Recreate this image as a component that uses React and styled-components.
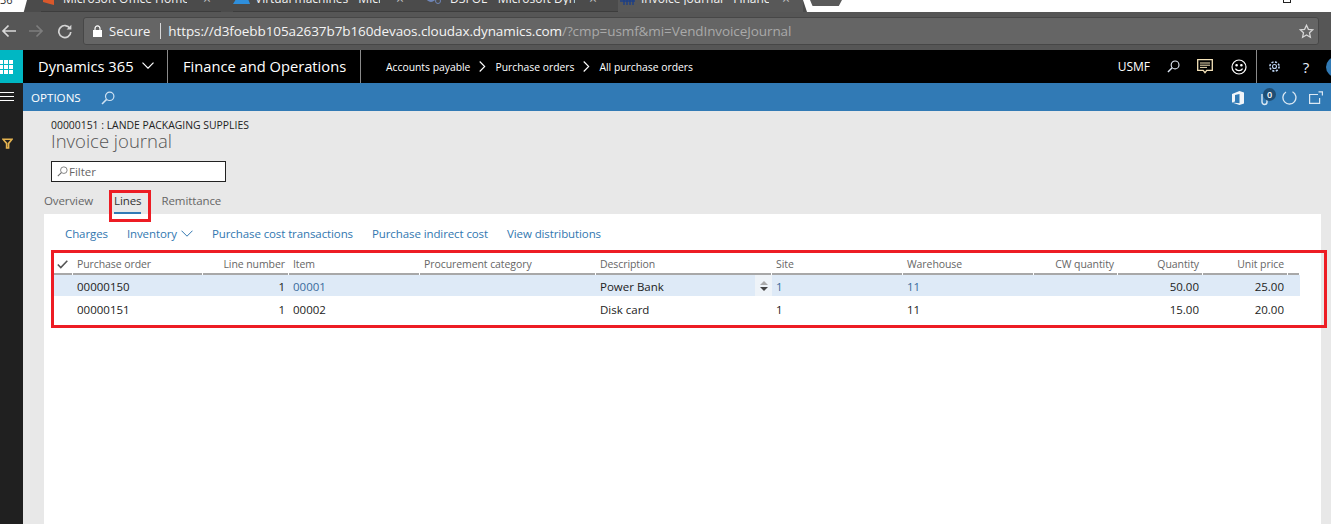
import React from "react";
import styled, { createGlobalStyle } from "styled-components";

const Global = createGlobalStyle`
  html, body { margin: 0; padding: 0; background: #e8e8e8; overflow: hidden; }
  * { box-sizing: border-box; }
  body { font-family: "Open Sans", "Noto Sans", sans-serif; }
`;

const Page = styled.div`
  position: relative;
  width: 1331px;
  height: 524px;
  overflow: hidden;
  display: flex;
  flex-direction: column;
`;

/* browser tabs */
const TabStrip = styled.div`
  height: 12px;
  flex: none;
  display: flex;
  background: #4b4b4b;
  overflow: hidden;
`;
const WhiteTab = styled.div`
  width: 27px;
  height: 12px;
  background: #fff;
  clip-path: polygon(0 0, 100% 0, 88% 100%, 0 100%);
  font-size: 11px;
  line-height: 0;
  color: #333;
  flex: none;
`;
const Tab = styled.div`
  width: ${p => p.$w}px;
  margin-left: ${p => p.$ml || 0}px;
  height: 12px;
  flex: none;
  display: flex;
  align-items: flex-end;
  padding-bottom: 3px;
  color: #f2f2f2;
  font-size: 12px;
  line-height: 12px;
  white-space: nowrap;
  overflow: hidden;
  background: ${p => (p.$active ? "#585858" : "transparent")};
  border-bottom: 1px solid ${p => (p.$active ? "#585858" : "#3d3d3d")};
`;
const TabIcon = styled.svg`
  width: 17px;
  height: 14px;
  flex: none;
  margin-right: ${p => p.$mr}px;
  margin-bottom: 3px;
`;
const TabTitle = styled.span`
  width: ${p => p.$w}px;
  flex: none;
  overflow: hidden;
  position: relative;
  top: -3px;
`;
const TabClose = styled.span`
  flex: none;
  margin-left: ${p => p.$ml}px;
  color: #bdbdbd;
  font-size: 14px;
  position: relative;
  top: -3px;
`;
const WindowArea = styled.div`
  flex: 1;
  height: 12px;
  background: #fff;
  clip-path: polygon(0 0, 100% 0, 100% 100%, 4px 100%);
  display: flex;
  justify-content: flex-end;
  padding-left: 7px;
`;
const NewTabShape = styled.div`
  width: 32px;
  height: 6px;
  background: #5a5a5a;
  clip-path: polygon(0 0, 100% 0, 90% 100%, 8% 100%);
  margin-right: auto;
`;
const WinSquare = styled.div`
  width: 8px;
  height: 3px;
  border: 1px solid #222;
  border-top: 0;
  margin-right: 40px;
`;

/* address bar */
const AddressRow = styled.div`
  height: 38px;
  flex: none;
  background: #565656;
  display: flex;
  align-items: center;
  padding: 0 12px 0 0;
`;
const NavIcons = styled.div`
  width: 83px;
  flex: none;
  display: flex;
  align-items: center;
  padding-left: 1px;
  gap: 13px;
`;
const Omnibox = styled.div`
  flex: 1;
  height: 28px;
  background: #656565;
  border: 1px solid #474747;
  border-radius: 3px;
  display: flex;
  align-items: center;
  padding: 0 4px 0 9px;
  font-size: 13.5px;
  color: #f4f4f4;
  white-space: nowrap;
`;
const Secure = styled.span`
  margin-left: 7px;
  padding-right: 10px;
  border-right: 1px solid #d8d8d8;
  line-height: 16px;
  font-size: 13px;
`;
const Url = styled.span`
  margin-left: 7px;
  letter-spacing: -0.09px;
`;
const UrlDim = styled.span`
  color: #a9a9a9;
`;
const Star = styled.svg`
  margin-left: auto;
`;

/* black navigation */
const NavBar = styled.div`
  height: 33px;
  flex: none;
  background: #000;
  display: flex;
  align-items: stretch;
  color: #fff;
  white-space: nowrap;
`;
const Launcher = styled.div`
  width: 23px;
  flex: none;
  background: #00b7c3;
  display: flex;
  align-items: center;
  overflow: hidden;
`;
const LaunchGrid = styled.div`
  display: grid;
  grid-template-columns: repeat(3, 4px);
  gap: 1px;
  margin-left: -1px;
`;
const LaunchDot = styled.i`
  width: 4px;
  height: 4px;
  background: #fff;
`;
const Product = styled.div`
  width: ${p => p.$w}px;
  flex: none;
  display: flex;
  align-items: center;
  padding: 0 0 2px ${p => p.$pl}px;
  border-right: 1px solid #8a8a8a;
  font-size: 14.7px;
  gap: 8px;
`;
const Crumbs = styled.div`
  display: flex;
  align-items: center;
  padding-left: 25px;
  font-size: 10.35px;
  flex: 1;
`;
const CrumbArrow = styled.svg`
  margin: 0 9px;
`;
const NavRight = styled.div`
  display: flex;
  align-items: center;
  flex: none;
`;
const Company = styled.span`
  font-size: 12px;
  margin-right: 16px;
`;
const NavIconCell = styled.span`
  display: flex;
  align-items: center;
  justify-content: center;
  width: ${p => p.$w}px;
  height: 33px;
  flex: none;
  font-size: 15px;
  color: #e8f0ff;
`;
const NavDivider = styled.span`
  width: 1px;
  height: 33px;
  background: #8a8a8a;
  flex: none;
`;
const Avatar = styled.span`
  width: 20px;
  height: 20px;
  border-radius: 50%;
  background: #317ab5;
  flex: none;
  margin-left: 5px;
  margin-right: -15px;
`;

/* body */
const Body = styled.div`
  flex: 1;
  display: flex;
  min-height: 0;
`;
const Rail = styled.div`
  width: 23px;
  flex: none;
  background: #202020;
  display: flex;
  flex-direction: column;
`;
const Burger = styled.div`
  height: 27px;
  width: 100%;
  display: flex;
  flex-direction: column;
  justify-content: center;
  gap: 3px;
  padding-right: 9px;
  margin-bottom: 28px;
  i { display: block; height: 1px; background: #fff; }
`;
const RailFilter = styled.div`
  padding-left: 2px;
  display: flex;
`;
const Content = styled.div`
  flex: 1;
  min-width: 0;
  display: flex;
  flex-direction: column;
`;
const OptionsBar = styled.div`
  height: 27px;
  flex: none;
  background: #317ab5;
  display: flex;
  align-items: center;
  color: #fff;
  padding: 2px 0 0 8px;
`;
const OptionsLabel = styled.span`
  font-size: 11.6px;
  margin-right: 20px;
`;
const OptionsRight = styled.div`
  margin-left: auto;
  display: flex;
  align-items: center;
  padding-right: 8px;
`;
const ClipWrap = styled.span`
  position: relative;
  display: flex;
  margin-left: 16px;
  margin-right: 13px;
`;
const Badge = styled.span`
  position: absolute;
  left: 3px;
  top: -2px;
  width: 13px;
  height: 13px;
  border-radius: 50%;
  background: #1f4e74;
  color: #fff;
  font-size: 9px;
  font-weight: 600;
  line-height: 13px;
  text-align: center;
`;
const IconGap = styled.span`
  display: flex;
  margin-left: ${p => p.$ml}px;
`;
const Workspace = styled.div`
  flex: 1;
  min-height: 0;
  background: #e8e8e8;
  display: flex;
  flex-direction: column;
  padding-left: 21px;
  padding-right: 10px;
  border-top: 1px solid #317ab5;
`;
const Caption = styled.div`
  margin: 8px 0 0 7px;
  height: 13px;
  font-size: 10.4px;
  line-height: 13px;
  color: #222;
`;
const Title = styled.h1`
  margin: 0 0 0 7px;
  height: 18px;
  font-size: 18.5px;
  line-height: 18px;
  font-weight: 300;
  color: #555;
`;
const FilterBox = styled.div`
  margin: 11px 0 0 7px;
  width: 175px;
  height: 21px;
  flex: none;
  background: #fff;
  border: 1px solid #222;
  display: flex;
  align-items: center;
  padding-left: 5px;
  gap: 1px;
  font-size: 11.5px;
  color: #666;
`;
const TabRow = styled.div`
  height: 32px;
  flex: none;
  display: flex;
  align-items: stretch;
`;
const PageTab = styled.div`
  margin-left: ${p => p.$ml || 0}px;
  font-size: 11.5px;
  letter-spacing: -0.1px;
  color: ${p => (p.$active ? "#333" : "#666")};
  display: flex;
  align-items: center;
  height: 32px;
  padding-top: 7px;
  border-bottom: 2px solid ${p => (p.$active ? "#317ab5" : "transparent")};
`;
const Panel = styled.div`
  flex: 1;
  min-height: 0;
  background: #fff;
  padding: 0 21px 0 9px;
`;
const Actions = styled.div`
  height: 38px;
  display: flex;
  align-items: center;
  padding-left: 12px;
  padding-top: 1px;
  font-size: 11.5px;
  letter-spacing: -0.1px;
  color: #3277b0;
  white-space: nowrap;
`;
const Action = styled.span`
  display: flex;
  align-items: center;
  gap: 4px;
  margin-left: ${p => p.$ml || 0}px;
`;

/* grid */
const COLS = "20px 130px 86px 131px 176px 176px 131px 131px 84px 85px 85px 12px";
const GridRow = styled.div`
  display: grid;
  grid-template-columns: ${COLS};
  align-items: center;
  height: ${p => p.$h}px;
  background: ${p => (p.$on ? "#deeaf7" : "transparent")};
  font-size: 11.5px;
  color: #222;
`;
const HeadRow = styled(GridRow)`
  color: #666;
  font-size: 10.5px;
  letter-spacing: -0.08px;
`;
const HeadCell = styled.div`
  height: 100%;
  display: flex;
  align-items: center;
  justify-content: ${p => (p.$right ? "flex-end" : "flex-start")};
  padding: ${p => (p.$right ? "3px 3px 0 0" : "3px 0 0 4px")};
  margin-right: 1px;
  border-bottom: 2px solid #a8a8a8;
`;
const Cell = styled.div`
  height: 100%;
  display: flex;
  align-items: center;
  justify-content: ${p => (p.$right ? "flex-end" : "flex-start")};
  padding: ${p => (p.$right ? "1px 4px 0 0" : "1px 0 0 4px")};
  color: ${p => (p.$link ? "#3a6a9c" : "inherit")};
`;
const DescCell = styled(Cell)`
  justify-content: space-between;
  padding-top: 0;
`;
const DescText = styled.span`
  padding-top: 2px;
`;
const Spinner = styled.div`
  width: 17px;
  height: 21px;
  background: #eef3f8;
  display: flex;
  flex-direction: column;
  align-items: center;
  justify-content: center;
  gap: 2px;
`;
const Arrow = styled.i`
  width: 0;
  height: 0;
  border-left: 4px solid transparent;
  border-right: 4px solid transparent;
  ${p => (p.$up ? "border-bottom: 4px solid #aaa;" : "border-top: 4px solid #444;")}
`;

/* red annotation rectangles drawn over the screenshot */
const RedBox = styled.div`
  position: absolute;
  left: ${p => p.$x}px;
  top: ${p => p.$y}px;
  width: ${p => p.$w}px;
  height: ${p => p.$h}px;
  border: 3px solid #ed1c24;
  pointer-events: none;
`;

const Magnifier = ({ size = 14, color = "#fff", sw = 1.2 }) => (
  <svg width={size} height={size} viewBox="0 0 14 14" fill="none" stroke={color} strokeWidth={sw}>
    <circle cx="8.7" cy="5.3" r="4.2" />
    <path d="M5.6 8.4 1 13" strokeWidth={sw + 0.3} />
  </svg>
);

const Chevron = ({ w = 12, h = 7, color = "#fff", sw = 1.2 }) => (
  <svg width={w} height={h} viewBox="0 0 12 7" fill="none" stroke={color} strokeWidth={sw}>
    <path d="M.5.7 6 6.2 11.5.7" />
  </svg>
);

const Filter = () => (
  <svg width="11" height="11" viewBox="0 0 11 11" fill="none" stroke="#e6b450" strokeWidth="1.6">
    <path d="M1 1.2h9L6.6 5.4V10H4.6V5.4z" />
  </svg>
);

const columns = [
  ["Purchase order"], ["Line number", true], ["Item"], ["Procurement category"], ["Description"],
  ["Site"], ["Warehouse"], ["CW quantity", true], ["Quantity", true], ["Unit price", true], [""],
];

export default function App() {
  return (
    <Page>
      <Global />
      <TabStrip>
        <WhiteTab>36</WhiteTab>
        <Tab $w={180} $ml={14}>
          <TabIcon $mr={5} viewBox="0 0 17 14"><path d="M2 2 9 0l4 2v12l-4-1-7-2z" fill="#d9582b" /></TabIcon>
          <TabTitle $w={124}>Microsoft Office Home</TabTitle>
          <TabClose $ml={16}>×</TabClose>
        </Tab>
        <Tab $w={192} $ml={12}>
          <TabIcon $mr={5} viewBox="0 0 17 14"><path d="M8 0h4l5 13H0z" fill="#2f8fdc" /></TabIcon>
          <TabTitle $w={125}>Virtual machines - Micro</TabTitle>
          <TabClose $ml={16}>×</TabClose>
        </Tab>
        <Tab $w={193}>
          <TabIcon $mr={8} viewBox="0 0 17 14"><circle cx="6" cy="6" r="4" fill="none" stroke="#6f86b8" strokeWidth="2" /><circle cx="13" cy="10" r="2.5" fill="none" stroke="#6f86b8" /></TabIcon>
          <TabTitle $w={125}>D3FOE - Microsoft Dyn</TabTitle>
          <TabClose $ml={14}>×</TabClose>
        </Tab>
        <Tab $w={185} $active>
          <TabIcon $mr={6} viewBox="0 0 17 14"><path d="M1 0h4v4H1zM2 10h15M6 6v8M9 6v8M12 6v8M15 6v8" fill="none" stroke="#1d3f86" strokeWidth="1.4" /></TabIcon>
          <TabTitle $w={128}>Invoice journal - Finance</TabTitle>
          <TabClose $ml={13}>×</TabClose>
        </Tab>
        <WindowArea>
          <NewTabShape />
          <WinSquare />
        </WindowArea>
      </TabStrip>

      <AddressRow>
        <NavIcons>
          <svg width="15" height="14" viewBox="0 0 15 14" fill="none" stroke="#d9d9d9" strokeWidth="1.7"><path d="M15 7H2M7.5 1.5 2 7l5.5 5.5" /></svg>
          <svg width="15" height="14" viewBox="0 0 15 14" fill="none" stroke="#7d7d7d" strokeWidth="1.7"><path d="M0 7h13M7.5 1.5 13 7l-5.5 5.5" /></svg>
          <svg width="15" height="15" viewBox="0 0 15 15" fill="none" stroke="#d4d4d4" strokeWidth="1.7"><path d="M13 4.5a6 6 0 1 0 .8 3.5" /><path d="M14.4 .8v4.8H9.6z" fill="#d4d4d4" stroke="none" /></svg>
        </NavIcons>
        <Omnibox>
          <svg width="9" height="12" viewBox="0 0 9 12"><path d="M0 5h9v7H0z" fill="#fff" /><path d="M2 5.5V3.4a2.5 2.5 0 0 1 5 0v2.1" fill="none" stroke="#fff" strokeWidth="1.2" /></svg>
          <Secure>Secure</Secure>
          <Url>https://d3foebb105a2637b7b160devaos.cloudax.dynamics.com<UrlDim>/?cmp=usmf&amp;mi=VendInvoiceJournal</UrlDim></Url>
          <Star width="15" height="15" viewBox="0 0 15 15" fill="none" stroke="#d6d6d6" strokeWidth="1.3"><path d="m7.5 1.3 1.9 4 4.4.5-3.3 3 .9 4.4-3.9-2.2-3.900 2.2.9-4.4-3.3-3 4.4-.5z" /></Star>
        </Omnibox>
      </AddressRow>

      <NavBar>
        <Launcher>
          <LaunchGrid>{Array.from({ length: 9 }, (_, i) => <LaunchDot key={i} />)}</LaunchGrid>
        </Launcher>
        <Product $w={145} $pl={15}>Dynamics 365 <Chevron /></Product>
        <Product $w={193} $pl={15}>Finance and Operations</Product>
        <Crumbs>
          Accounts payable
          <CrumbArrow width="7" height="11" viewBox="0 0 7 11" fill="none" stroke="#fff" strokeWidth="1.1"><path d="m.7.5 5 5-5 5" /></CrumbArrow>
          Purchase orders
          <CrumbArrow width="7" height="11" viewBox="0 0 7 11" fill="none" stroke="#fff" strokeWidth="1.1"><path d="m.7.5 5 5-5 5" /></CrumbArrow>
          All purchase orders
        </Crumbs>
        <NavRight>
          <Company>USMF</Company>
          <NavIconCell $w={14}><Magnifier size={13} color="#dfe8f5" /></NavIconCell>
          <NavIconCell $w={49}>
            <svg width="16" height="15" viewBox="0 0 16 15" fill="none" stroke="#f4e2b8" strokeWidth="1.3"><path d="M.7.7h14.6v10.6H9.8L8 13.6l-1.8-2.3H.7z" /><path d="M3 4h10M3 6.2h10M3 8.4h7" strokeWidth="1" /></svg>
          </NavIconCell>
          <NavIconCell $w={19}>
            <svg width="16" height="16" viewBox="0 0 16 16" fill="none" stroke="#fff" strokeWidth="1.2"><circle cx="8" cy="8" r="7" /><circle cx="5.6" cy="6.2" r=".7" fill="#fff" /><circle cx="10.4" cy="6.2" r=".7" fill="#fff" /><path d="M4.4 9.6c1.6 2.6 5.6 2.6 7.2 0" /></svg>
          </NavIconCell>
          <NavIconCell $w={8} />
          <NavDivider />
          <NavIconCell $w={34}>
            <svg width="13" height="13" viewBox="0 0 13 13" fill="none" stroke="#bcd3f2" strokeWidth="1.1"><circle cx="6.5" cy="6.5" r="2" /><circle cx="6.5" cy="6.5" r="4.6" strokeWidth="1.6" strokeDasharray="2.1 1.5" /></svg>
          </NavIconCell>
          <NavIconCell $w={30}>?</NavIconCell>
          <Avatar />
        </NavRight>
      </NavBar>

      <Body>
        <Rail>
          <Burger><i /><i /><i /></Burger>
          <RailFilter><Filter /></RailFilter>
        </Rail>
        <Content>
          <OptionsBar>
            <OptionsLabel>OPTIONS</OptionsLabel>
            <Magnifier size={14} color="#cfe2f3" />
            <OptionsRight>
              <svg width="12" height="14" viewBox="0 0 12 14"><path d="M0 3 7.5 0 12 1.5v11L7.5 14 0 11.5 7.5 12.2V3L3 4v6.5L0 11.5z" fill="#f1f5f9" /></svg>
              <ClipWrap>
                <svg width="9" height="16" viewBox="0 0 9 16" fill="none" stroke="#dbe8f3" strokeWidth="1.4"><path d="M2 4v8a2.5 2.5 0 0 0 5 0V3" /></svg>
                <Badge>0</Badge>
              </ClipWrap>
              <svg width="15" height="15" viewBox="0 0 15 15" fill="none" stroke="#dbe8f3" strokeWidth="1.3"><path d="M10.5 1.8A6.5 6.5 0 1 1 4 2" /></svg>
              <IconGap $ml={12}>
                <svg width="14" height="13" viewBox="0 0 14 13" fill="none" stroke="#dbe8f3" strokeWidth="1.2"><path d="M9 3.5H.6v8.900h10V7" /><path d="M9.5 .8H13.4v3.600" /></svg>
              </IconGap>
            </OptionsRight>
          </OptionsBar>

          <Workspace>
            <Caption>00000151 : LANDE PACKAGING SUPPLIES</Caption>
            <Title>Invoice journal</Title>
            <FilterBox><Magnifier size={11} color="#666" sw={1} />Filter</FilterBox>
            <TabRow>
              <PageTab>Overview</PageTab>
              <PageTab $ml={21} $active>Lines</PageTab>
              <PageTab $ml={20}>Remittance</PageTab>
            </TabRow>
            <Panel>
              <Actions>
                <Action>Charges</Action>
                <Action $ml={19}>Inventory <Chevron color="#3277b0" sw={1} /></Action>
                <Action $ml={19}>Purchase cost transactions</Action>
                <Action $ml={19}>Purchase indirect cost</Action>
                <Action $ml={19}>View distributions</Action>
              </Actions>
              <HeadRow $h={23}>
                <HeadCell>
                  <svg width="11" height="9" viewBox="0 0 11 9" fill="none" stroke="#555" strokeWidth="1.6"><path d="m.8 4.5 3 3 6.5-6.8" /></svg>
                </HeadCell>
                {columns.map(([label, right], i) => <HeadCell key={i} $right={right}>{label}</HeadCell>)}
              </HeadRow>
              <GridRow $h={21} $on>
                <span />
                <Cell>00000150</Cell>
                <Cell $right>1</Cell>
                <Cell $link>00001</Cell>
                <span />
                <DescCell><DescText>Power Bank</DescText><Spinner><Arrow $up /><Arrow /></Spinner></DescCell>
                <Cell $link>1</Cell>
                <Cell $link>11</Cell>
                <span />
                <Cell $right>50.00</Cell>
                <Cell $right>25.00</Cell>
                <span />
              </GridRow>
              <GridRow $h={25}>
                <span />
                <Cell>00000151</Cell>
                <Cell $right>1</Cell>
                <Cell>00002</Cell>
                <span />
                <Cell>Disk card</Cell>
                <Cell>1</Cell>
                <Cell>11</Cell>
                <span />
                <Cell $right>15.00</Cell>
                <Cell $right>20.00</Cell>
                <span />
              </GridRow>
            </Panel>
          </Workspace>
        </Content>
      </Body>
      <RedBox $x={109} $y={190} $w={42} $h={32} />
      <RedBox $x={51} $y={250} $w={1276} $h={78} />
    </Page>
  );
}
